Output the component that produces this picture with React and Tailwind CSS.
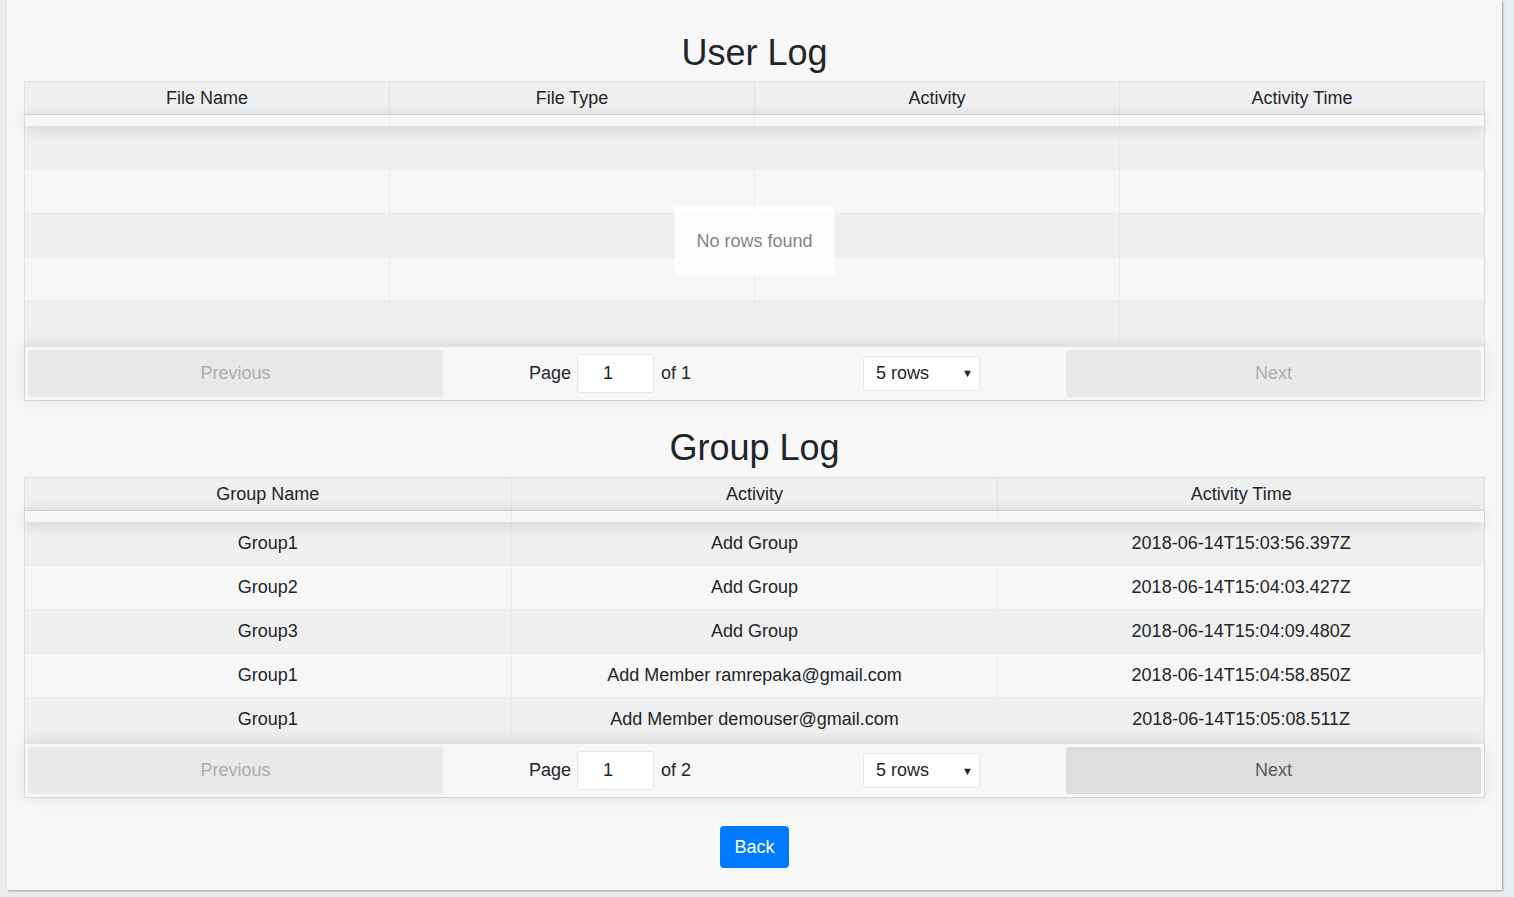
import React from 'react';

const userCols = ['File Name', 'File Type', 'Activity', 'Activity Time'];
const groupCols = ['Group Name', 'Activity', 'Activity Time'];
const groupRows = [
	['Group1', 'Add Group', '2018-06-14T15:03:56.397Z'],
	['Group2', 'Add Group', '2018-06-14T15:04:03.427Z'],
	['Group3', 'Add Group', '2018-06-14T15:04:09.480Z'],
	['Group1', 'Add Member ramrepaka@gmail.com', '2018-06-14T15:04:58.850Z'],
	['Group1', 'Add Member demouser@gmail.com', '2018-06-14T15:05:08.511Z'],
];

function Pagination({ pages, nextEnabled }) {
	return (
		<div className="flex items-stretch p-[3px] border-t-2 border-[#e3e3e3] shadow-[0_0_15px_0_rgba(0,0,0,0.1)] relative z-10 bg-[#f7f7f7]">
			<div className="flex-1">
				<button className="w-full h-[47px] rounded-[3px] bg-[#e9e9e9] text-[#adadad] text-[18px]">Previous</button>
			</div>
			<div className="flex-[1.5] flex items-center justify-around">
				<div className="mx-[10px] flex items-center text-[18px] text-[#212529]">
					<span>Page</span>
					<div className="ml-[6px] w-[77px] h-[39px] bg-white border border-[#e6e6e6] rounded-[3px] flex items-center pl-[25px]">1</div>
					<span className="ml-[7px]">of {pages}</span>
				</div>
				<div className="mx-[10px] w-[117px] h-[35px] bg-white border border-[#e6e6e6] rounded-[3px] flex items-center justify-between pl-3 pr-[6px] text-[18px] text-[#212529]">
					<span>5 rows</span>
					<span className="text-[11px]">▼</span>
				</div>
			</div>
			<div className="flex-1">
				<button
					className={
						nextEnabled
							? 'w-full h-[47px] rounded-[3px] bg-[#dedede] text-[#5b5b5b] text-[18px]'
							: 'w-full h-[47px] rounded-[3px] bg-[#e9e9e9] text-[#adadad] text-[18px]'
					}
				>
					Next
				</button>
			</div>
		</div>
	);
}

function LogTable({ cols, rows, rowH }) {
	const body = [0, 1, 2, 3, 4].map((i) => rows[i] || null);
	return (
		<div className="relative border border-[#dedede]">
			<div className="flex bg-[#efefef] border-b border-[#dadada] h-[33px]">
				{cols.map((c, i) => (
					<div key={c} className={'flex-1 flex items-center justify-center text-[18px] text-[#212529] ' + (i < cols.length - 1 ? 'border-r border-[#e2e2e2]' : '')}>
						{c}
					</div>
				))}
			</div>
			<div className="relative z-10 flex h-[11px] bg-[#f7f7f7] shadow-[0_2px_15px_0_rgba(0,0,0,0.15)]">
				{cols.map((c, i) => (
					<div key={c} className={'flex-1 ' + (i < cols.length - 1 ? 'border-r border-[#ececec]' : '')} />
				))}
			</div>
			{body.map((r, ri) => (
				<div key={ri} className={'flex border-b border-[#ebebeb] ' + rowH + ' ' + (ri % 2 === 0 ? 'bg-[#efefef]' : 'bg-[#f7f7f7]')}>
					{cols.map((c, i) => (
						<div key={c} className={'flex-1 flex items-center justify-center text-[18px] text-[#212529] ' + (i < cols.length - 1 ? 'border-r border-[#eaeaea]' : '')}>
							{r ? r[i] : ''}
						</div>
					))}
				</div>
			))}
			<Pagination pages={rows.length ? 2 : 1} nextEnabled={rows.length > 0} />
			{rows.length === 0 && (
				<div className="absolute left-1/2 top-1/2 -translate-x-1/2 -translate-y-1/2 z-20 bg-[rgba(255,255,255,0.8)] px-[22px] py-[21px] text-[18px] text-[rgba(0,0,0,0.5)]">
					No rows found
				</div>
			)}
		</div>
	);
}

export default function App() {
	return (
		<div className="h-[897px] bg-[#e9ecef] overflow-hidden" style={{ fontFamily: '"Liberation Sans", Arial, sans-serif' }}>
			<div className="ml-[7px] w-[1495px] h-[890px] bg-[#f7f7f7] shadow-[1px_1px_2px_rgba(0,0,0,0.35)] px-[17px] pt-[31px]">
				<h1 className="text-center text-[36px] leading-[1.2] text-[#212529] mb-[7px]">User Log</h1>
				<LogTable cols={userCols} rows={[]} rowH="h-[43.8px]" />
				<h1 className="text-center text-[36px] leading-[1.2] text-[#212529] mt-[25px] mb-[8px]">Group Log</h1>
				<LogTable cols={groupCols} rows={groupRows} rowH="h-[44px]" />
				<div className="flex justify-center mt-[28px]">
					<button className="h-[42px] px-[14px] rounded-[4px] bg-[#007bff] text-white text-[18px]">Back</button>
				</div>
			</div>
		</div>
	);
}
